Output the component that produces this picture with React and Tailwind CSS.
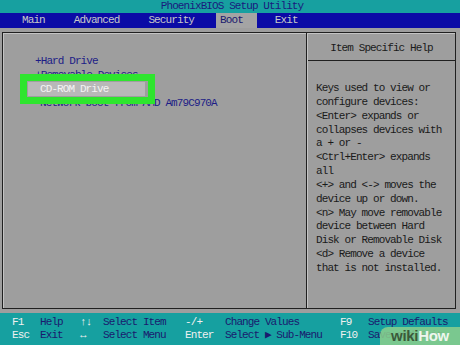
export default function App() {
  const mono = { fontFamily: '"Liberation Mono", "DejaVu Sans Mono", monospace' };

  const help = [
    "Keys used to view or",
    "configure devices:",
    "<Enter> expands or",
    "collapses devices with",
    "a + or -",
    "<Ctrl+Enter> expands",
    "all",
    "<+> and <-> moves the",
    "device up or down.",
    "<n> May move removable",
    "device between Hard",
    "Disk or Removable Disk",
    "<d> Remove a device",
    "that is not installed.",
  ];

  const footer = [
    ["F1", "Help", "↑↓", "Select Item", "-/+", "Change Values", "F9", "Setup Defaults"],
    ["Esc", "Exit", "↔", "Select Menu", "Enter", "Select ▶ Sub-Menu", "F10", "Save and Exit"],
  ];

  return (
    <div
      className="relative w-[460px] h-[345px] overflow-hidden bg-[#9e9e9e] flex flex-col text-[11px] tracking-[-0.9px]"
      style={mono}
    >
      {/* Title */}
      <div className="h-[13px] bg-[#17a0a0] flex items-center justify-center pl-[4px] text-[#1a1a7e] leading-none">
        PhoenixBIOS Setup Utility
      </div>

      {/* Menu bar */}
      <div className="h-[15px] bg-[#0b0ba6] flex items-center text-[#c8c8c8] leading-none">
        <span className="ml-[22px]">Main</span>
        <span className="ml-[29px]">Advanced</span>
        <span className="ml-[29px]">Security</span>
        <span className="ml-[22px] h-full bg-[#a4a4a4] text-[#1a1a6e] flex items-center pl-[4px] pr-[14px]">Boot</span>
        <span className="ml-[18px]">Exit</span>
      </div>

      {/* Main area */}
      <div className="flex-1 pt-[4px] pl-[2px] pr-[4px] pb-[4px]">
        <div className="h-full flex border border-[#202020] shadow-[inset_1px_1px_0_#c4c4c4]">
          {/* Left list */}
          <div className="relative w-[304px] border-r border-[#202020] pt-[21px] pl-[32px] text-[#1c1c86] leading-[14px]">
            <div>+Hard Drive</div>
            <div>+Removable Devices</div>
            <div className="ml-[-7px] w-[117px] pl-[12px] bg-[#b8b8b8] text-[#f4f4f4]">CD-ROM Drive</div>
            <div className="pl-[5px]">Network boot from AMD Am79C970A</div>
            <div className="absolute left-[17px] top-[41px] w-[135px] h-[30px] border-[7px] border-[#2ee52e]" />
          </div>

          {/* Help panel */}
          <div className="flex-1 flex flex-col text-[#1a1a1a] border-l border-[#c4c4c4]">
            <div className="h-[28px] flex items-center justify-center pt-[3px] border-b border-[#202020]">
              Item Specific Help
            </div>
            <div className="pt-[21px] pl-[8px] leading-[13.85px] whitespace-pre">
              {help.map((l, i) => (
                <div key={i}>{l}</div>
              ))}
            </div>
          </div>
        </div>
      </div>

      {/* Footer */}
      <div className="h-[32px] bg-[#16a0a0] pt-[3px] leading-[13px]">
        {footer.map((r, i) => (
          <div key={i} className="flex whitespace-pre">
            <span className="ml-[12px] w-[28px] text-[#f0f0f0]">{r[0]}</span>
            <span className="w-[40px] text-[#1a1a6e]">{r[1]}</span>
            <span className="w-[23px] text-[#f0f0f0]">{r[2]}</span>
            <span className="w-[82px] text-[#1a1a6e]">{r[3]}</span>
            <span className="w-[40px] text-[#f0f0f0]">{r[4]}</span>
            <span className="w-[115px] text-[#1a1a6e]">{r[5]}</span>
            <span className="w-[28px] text-[#f0f0f0]">{r[6]}</span>
            <span className="text-[#1a1a6e]">{r[7]}</span>
          </div>
        ))}
      </div>

      {/* watermark */}
      <div
        className="absolute right-0 bottom-0 w-[80px] h-[18px] bg-[#8ccf8c]/85 rounded-tl-[8px] flex items-center justify-center text-[15px] font-bold tracking-[-0.3px]"
        style={{ fontFamily: '"Liberation Sans", sans-serif' }}
      >
        <span className="text-[#3a5a3a]">wiki</span>
        <span className="text-[#eef6ee]">How</span>
      </div>
    </div>
  );
}
